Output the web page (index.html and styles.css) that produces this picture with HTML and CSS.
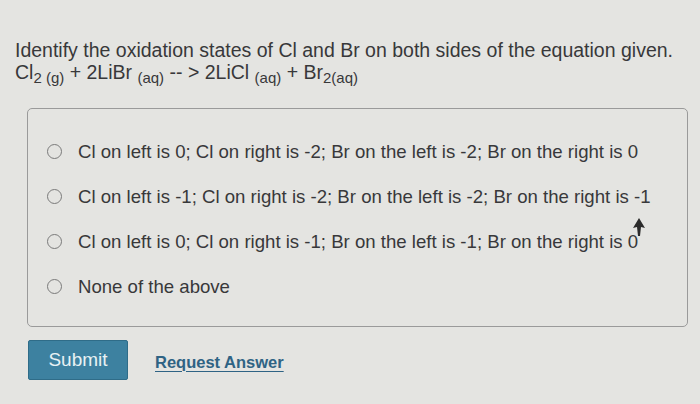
FILE: index.html
```html
<!DOCTYPE html>
<html>
<head>
<meta charset="utf-8">
<link rel="stylesheet" href="styles.css">
</head>
<body>
<div class="page">
  <div class="question">
    <p class="prompt">Identify the oxidation states of Cl and Br on both sides of the equation given.</p>
    <p class="equation">Cl<sub>2 (g)</sub> + 2LiBr <sub>(aq)</sub> --&nbsp;&gt; 2LiCl <sub>(aq)</sub> + Br<sub>2(aq)</sub></p>
  </div>
  <div class="choices">
    <label class="choice"><span class="radio"></span><span>Cl on left is 0; Cl on right is -2; Br on the left is -2; Br on the right is 0</span></label>
    <label class="choice"><span class="radio"></span><span>Cl on left is -1; Cl on right is -2; Br on the left is -2; Br on the right is -1</span></label>
    <label class="choice"><span class="radio"></span><span>Cl on left is 0; Cl on right is -1; Br on the left is -1; Br on the right is 0</span></label>
    <label class="choice"><span class="radio"></span><span>None of the above</span></label>
    <svg class="cursor" width="14" height="20" viewBox="0 0 14 20"><path d="M7 1 L13 11 L9 10 L8 19 L6 19 L5 10 L1 11 Z" fill="#2b2b2b"/></svg>
  </div>
  <div class="actions">
    <button class="submit">Submit</button>
    <a class="request" href="#">Request Answer</a>
  </div>
</div>
</body>
</html>
```
FILE: styles.css
```css
html, body {
  margin: 0;
  padding: 0;
}
body {
  background: #e4e4e1;
  font-family: "Liberation Sans", Arial, sans-serif;
  color: #38383a;
  width: 700px;
  height: 404px;
  overflow: hidden;
}
.page {
  padding: 39px 12px 0 15px;
}
.prompt {
  margin: 0;
  font-size: 19.5px;
  line-height: 22px;
}
.equation {
  margin: 0;
  font-size: 19.5px;
  line-height: 22px;
}
.equation sub {
  font-size: 15px;
  vertical-align: -4px;
  line-height: 0;
}
.choices {
  position: relative;
  margin: 25px 0 0 12px;
  height: 219px;
  border: 1.5px solid #9a9a9a;
  border-radius: 5px;
  box-sizing: border-box;
  padding: 30px 0 0 19px;
  display: flex;
  flex-direction: column;
  gap: 20px;
}
.choice {
  display: flex;
  align-items: center;
  gap: 16px;
  font-size: 18.6px;
  line-height: 25px;
  height: 25px;
}
.radio {
  width: 13px;
  height: 13px;
  border: 1.7px solid #7a7a7a;
  border-radius: 50%;
  flex: none;
}
.cursor {
  position: absolute;
  left: 604px;
  top: 108px;
}
.actions {
  margin: 13px 0 0 13px;
  display: flex;
  align-items: center;
  gap: 27px;
}
.submit {
  width: 100px;
  height: 40px;
  background: #3d81a0;
  border: 1px solid #2f6c88;
  border-radius: 2px;
  color: #e8f1f4;
  font-family: "Liberation Sans", Arial, sans-serif;
  font-size: 19px;
  padding: 0;
}
.request {
  color: #2f6384;
  font-weight: bold;
  font-size: 16.5px;
  text-decoration: underline;
  text-decoration-thickness: 1px;
  text-underline-offset: 3px;
  margin-top: 4px;
}
```
